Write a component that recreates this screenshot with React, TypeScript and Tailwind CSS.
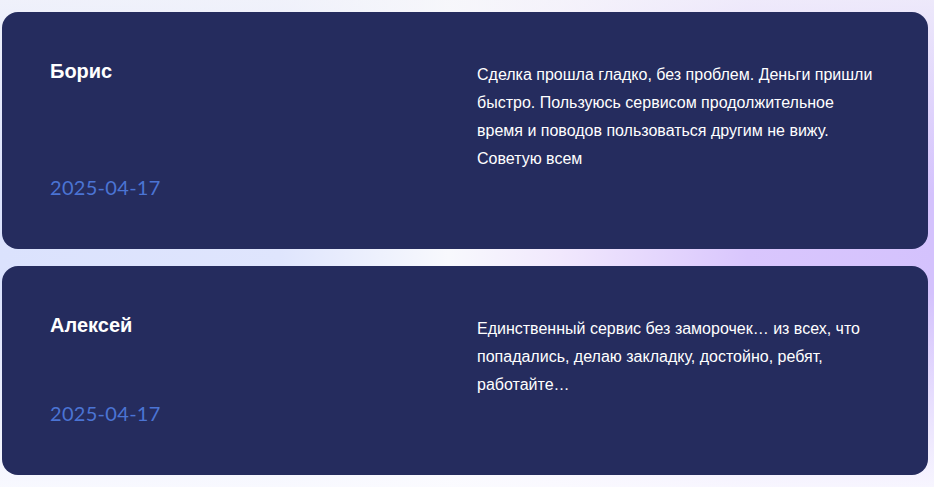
import React from 'react';

type Review = {
    name: string;
    date: string;
    text: string;
};

const reviews: Review[] = [
    {
        name: 'Борис',
        date: '2025-04-17',
        text: 'Сделка прошла гладко, без проблем. Деньги пришли быстро. Пользуюсь сервисом продолжительное время и поводов пользоваться другим не вижу. Советую всем',
    },
    {
        name: 'Алексей',
        date: '2025-04-17',
        text: 'Единственный сервис без заморочек… из всех, что попадались, делаю закладку, достойно, ребят, работайте…',
    },
];

const ReviewCard: React.FC<{ review: Review }> = ({ review }) => {
    return (
        <div className="grid grid-cols-2 gap-6 rounded-2xl bg-[#252c5e] px-12 pt-[45px] pb-12">
            {/* Author and date */}
            <div className="flex flex-col justify-between">
                <h3 className="font-['Liberation_Sans',Arial,sans-serif] text-xl leading-7 font-bold text-white">
                    {review.name}
                </h3>
                <span className="font-['Lato',sans-serif] text-xl leading-7 tracking-[0.3px] text-[#4b74d4]">
                    {review.date}
                </span>
            </div>

            {/* Review text */}
            <p className="pt-[4px] pb-[28px] font-['Liberation_Sans',Arial,sans-serif] text-base leading-7 text-white">
                {review.text}
            </p>
        </div>
    );
};

const App: React.FC = () => {
    return (
        <div className="min-h-screen w-full bg-[linear-gradient(180deg,rgba(246,246,250,0.75)_0%,rgba(246,246,250,0)_40%,rgba(246,246,250,0)_60%,rgba(251,251,255,0.9)_100%),linear-gradient(90deg,#dbe2fd_0%,#dfe5fd_30%,#f8f9fd_48%,#f1e8fd_60%,#d9c6fd_80%,#d4c2fd_100%)] pt-3 pr-[6px] pb-3 pl-[2px]">
            <div className="flex flex-col gap-[17px]">
                {reviews.map((r) => (
                    <ReviewCard key={r.name} review={r} />
                ))}
            </div>
        </div>
    );
};

export default App;
